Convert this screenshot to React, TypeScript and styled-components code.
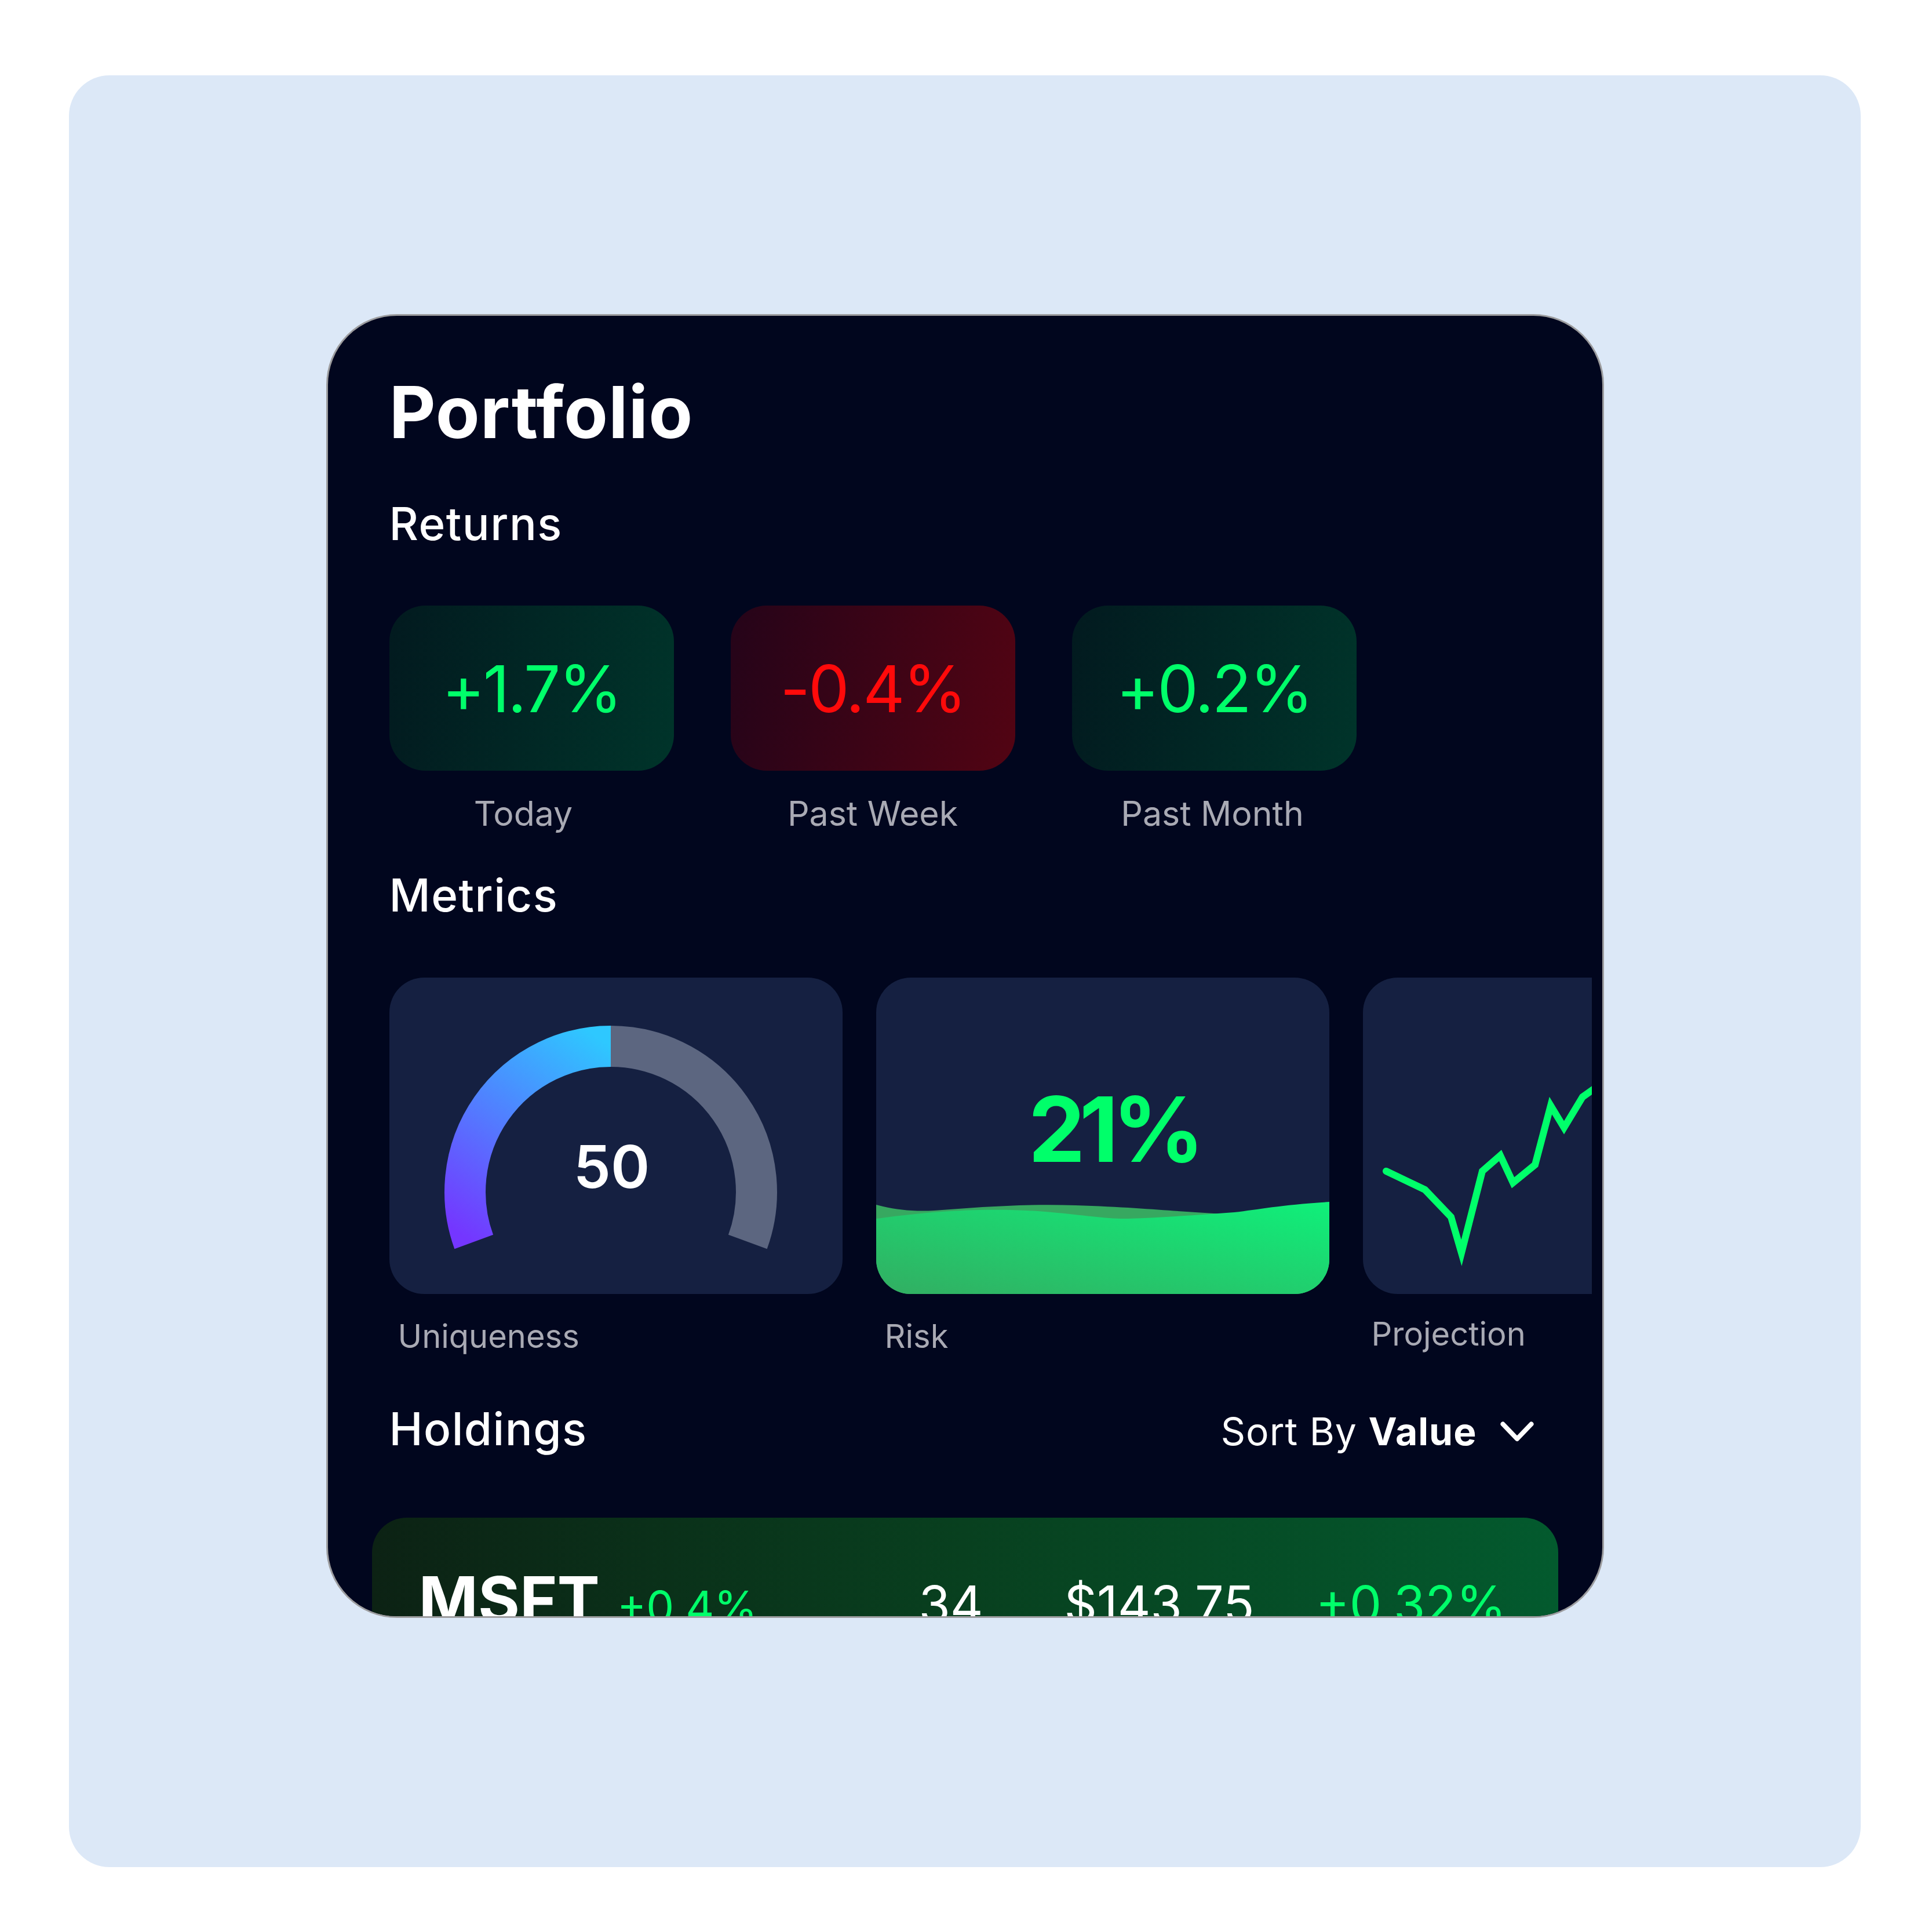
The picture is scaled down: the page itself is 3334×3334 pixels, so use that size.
import React from 'react';
import styled, { createGlobalStyle } from 'styled-components';

const GREEN = '#00FF6A';
const RED = '#FF0A0A';

const GlobalStyle = createGlobalStyle`
  body {
    margin: 0;
    background: #ffffff;
    font-family: Inter, "Noto Sans", sans-serif;
  }
`;

const Page = styled.div`
  width: 3334px;
  height: 3334px;
  box-sizing: border-box;
  padding: 130px 0 0 119px;
`;

const Panel = styled.div`
  width: 3092px;
  height: 3092px;
  box-sizing: border-box;
  padding-top: 412px;
  border-radius: 70px;
  background: #dce8f7;
  display: flex;
  justify-content: center;
`;

const Card = styled.section`
  width: 2205px;
  height: 2250px;
  box-sizing: border-box;
  border: 3px solid #9c9c9e;
  border-radius: 122px;
  background: #01061e;
  overflow: hidden;
  padding: 104px 106px 0;
  display: flex;
  flex-direction: column;

  & > * {
    flex-shrink: 0;
  }
`;

const Title = styled.h1`
  margin: 0;
  font-size: 124px;
  font-weight: 700;
  line-height: 1;
  letter-spacing: 1px;
  color: #ffffff;
`;

const SectionTitle = styled.h2<{ $gap: number }>`
  margin: ${(p) => p.$gap}px 0 0;
  font-size: 78px;
  font-weight: 500;
  line-height: 1;
  letter-spacing: 1.5px;
  color: #ffffff;
`;

const ReturnsRow = styled.div`
  display: flex;
  gap: 98px;
  margin-top: 102px;
`;

const ReturnItem = styled.div`
  width: 491px;
  display: flex;
  flex-direction: column;
  align-items: center;
  gap: 44px;
`;

const Pill = styled.div<{ $tone: 'up' | 'down' }>`
  width: 491px;
  height: 285px;
  border-radius: 62px;
  display: flex;
  align-items: center;
  justify-content: center;
  font-size: 112px;
  font-weight: 400;
  line-height: 1;
  letter-spacing: -3px;
  color: ${(p) => (p.$tone === 'up' ? GREEN : RED)};
  background: ${(p) =>
    p.$tone === 'up'
      ? 'linear-gradient(100deg, #021a1f 0%, #00342a 100%)'
      : 'linear-gradient(100deg, #250419 0%, #520413 100%)'};
`;

const Caption = styled.span<{ $indent?: number; $shift?: number; $size?: number }>`
  font-size: ${(p) => p.$size ?? 59}px;
  line-height: 1;
  color: #a9aab4;
  padding-left: ${(p) => p.$indent ?? 0}px;
  margin-left: ${(p) => p.$shift ?? 0}px;
`;

const MetricsScroller = styled.div`
  margin-top: 103px;
  margin-right: -88px;
  padding-bottom: 20px;
  overflow: hidden;
`;

const MetricsTrack = styled.div`
  display: flex;
  gap: 58px;
  width: max-content;
`;

const MetricItem = styled.div<{ $lift?: number }>`
  width: 782px;
  flex-shrink: 0;
  display: flex;
  flex-direction: column;
  gap: ${(p) => 45 - (p.$lift ?? 0)}px;
`;

const MetricCard = styled.div`
  width: 782px;
  height: 546px;
  flex-shrink: 0;
  border-radius: 60px;
  background: #152041;
  overflow: hidden;
  display: grid;

  & > * {
    grid-area: 1 / 1;
  }
`;

const CardArt = styled.svg`
  width: 782px;
  height: 546px;
  display: block;
`;

const GaugeValue = styled.div`
  justify-self: start;
  align-self: start;
  width: 768px;
  margin-top: 275px;
  text-align: center;
  font-size: 102px;
  font-weight: 600;
  line-height: 1;
  color: #ffffff;
`;

const RiskValue = styled.div`
  justify-self: start;
  align-self: start;
  width: 782px;
  box-sizing: border-box;
  padding-left: 38px;
  margin-top: 184px;
  text-align: center;
  font-size: 156px;
  font-weight: 700;
  line-height: 1;
  letter-spacing: -10px;
  color: ${GREEN};
`;

const HoldingsHeader = styled.div`
  margin-top: 73px;
  display: flex;
  justify-content: space-between;
  align-items: baseline;
`;

const SortButton = styled.button`
  display: inline-flex;
  align-items: center;
  gap: 40px;
  margin-right: 12px;
  padding: 0;
  border: 0;
  background: none;
  font-family: inherit;
  font-size: 66px;
  line-height: 1;
  letter-spacing: 1px;
  color: #ffffff;

  b {
    font-weight: 700;
  }
`;

const HoldingRow = styled.div`
  margin: 114px -30px 0;
  height: 320px;
  box-sizing: border-box;
  padding: 86px 105px 0 81px;
  border-radius: 60px;
  background: linear-gradient(90deg, #0c2214 0%, #08401f 50%, #035a2e 100%);
  display: flex;
  align-items: baseline;
`;

const TickerGroup = styled.div`
  flex: 0 0 863px;
  display: flex;
  align-items: baseline;
  gap: 30px;
`;

const Ticker = styled.span`
  font-size: 110px;
  font-weight: 700;
  line-height: 1;
  color: #ffffff;
`;

const Cell = styled.span<{ $width?: number; $green?: boolean; $size?: number }>`
  flex: ${(p) => (p.$width ? `0 0 ${p.$width}px` : '0 0 auto')};
  font-size: ${(p) => p.$size ?? 88}px;
  line-height: 1;
  color: ${(p) => (p.$green ? GREEN : '#ffffff')};
`;

const returns = [
  { value: '+1.7%', label: 'Today', tone: 'up' as const, shift: -28 },
  { value: '-0.4%', label: 'Past Week', tone: 'down' as const, shift: 0 },
  { value: '+0.2%', label: 'Past Month', tone: 'up' as const, shift: -6 },
];

function Gauge() {
  return (
    <CardArt viewBox="0 0 782 546">
      <defs>
        <linearGradient id="gaugeFill" x1="146" y1="460" x2="382" y2="118" gradientUnits="userSpaceOnUse">
          <stop offset="0" stopColor="#7436FF" />
          <stop offset="1" stopColor="#2EC8FF" />
        </linearGradient>
      </defs>
      <path
        d="M382 118.5 A251.5 251.5 0 0 1 618.3 456"
        fill="none"
        stroke="#5c6680"
        strokeWidth="71"
      />
      <path
        d="M145.7 456 A251.5 251.5 0 0 1 382 118.5"
        fill="none"
        stroke="url(#gaugeFill)"
        strokeWidth="71"
      />
    </CardArt>
  );
}

function RiskWaves() {
  return (
    <CardArt viewBox="0 0 782 546" preserveAspectRatio="none">
      <defs>
        <linearGradient id="waveFill" x1="0" y1="1" x2="1" y2="0">
          <stop offset="0" stopColor="#32ae62" />
          <stop offset="1" stopColor="#0ff07a" />
        </linearGradient>
      </defs>
      <path
        d="M0 392 C30 400 60 404 100 402 C180 396 260 390 344 393 C440 396 500 402 551 405 C640 410 720 418 782 421 L782 546 L0 546 Z"
        fill="#37a860"
      />
      <path
        d="M0 416 C60 408 120 402 178 401 C230 400 270 402 303 405 C360 410 400 417 435 416 C500 414 560 409 618 405 C660 400 700 392 782 387 L782 546 L0 546 Z"
        fill="url(#waveFill)"
      />
    </CardArt>
  );
}

function ProjectionChart() {
  return (
    <CardArt viewBox="0 0 782 546">
      <polyline
        points="40,334 107,366 152,413 170,475 206,334 237,307 259,354 297,323 324,221 347,259 379,206 396,194 440,160"
        fill="none"
        stroke={GREEN}
        strokeWidth="12"
        strokeLinejoin="miter"
        strokeLinecap="round"
      />
    </CardArt>
  );
}

export default function App() {
  return (
    <>
      <GlobalStyle />
      <Page>
        <Panel>
          <Card>
            <Title>Portfolio</Title>

            <SectionTitle $gap={92}>Returns</SectionTitle>
            <ReturnsRow>
              {returns.map((r) => (
                <ReturnItem key={r.label}>
                  <Pill $tone={r.tone}>{r.value}</Pill>
                  <Caption $shift={r.shift}>{r.label}</Caption>
                </ReturnItem>
              ))}
            </ReturnsRow>

            <SectionTitle $gap={73}>Metrics</SectionTitle>
            <MetricsScroller>
              <MetricsTrack>
                <MetricItem>
                  <MetricCard>
                    <Gauge />
                    <GaugeValue>50</GaugeValue>
                  </MetricCard>
                  <Caption $indent={15} $size={56}>Uniqueness</Caption>
                </MetricItem>
                <MetricItem>
                  <MetricCard>
                    <RiskWaves />
                    <RiskValue>21%</RiskValue>
                  </MetricCard>
                  <Caption $indent={15} $size={56}>Risk</Caption>
                </MetricItem>
                <MetricItem $lift={4}>
                  <MetricCard>
                    <ProjectionChart />
                  </MetricCard>
                  <Caption $indent={15} $size={56}>Projection</Caption>
                </MetricItem>
              </MetricsTrack>
            </MetricsScroller>

            <HoldingsHeader>
              <SectionTitle $gap={0}>Holdings</SectionTitle>
              <SortButton>
                <span>
                  Sort By <b>Value</b>
                </span>
                <svg width="58" height="35" viewBox="0 0 58 35">
                  <path
                    d="M4.5 4.5 L29 30 L53.5 4.5"
                    fill="none"
                    stroke="#ffffff"
                    strokeWidth="8"
                    strokeLinecap="round"
                    strokeLinejoin="round"
                  />
                </svg>
              </SortButton>
            </HoldingsHeader>

            <HoldingRow>
              <TickerGroup>
                <Ticker>MSFT</Ticker>
                <Cell $green $size={76}>+0.4%</Cell>
              </TickerGroup>
              <Cell $width={251}>34</Cell>
              <Cell $width={434}>$143.75</Cell>
              <Cell $green>+0.32%</Cell>
            </HoldingRow>
          </Card>
        </Panel>
      </Page>
    </>
  );
}
